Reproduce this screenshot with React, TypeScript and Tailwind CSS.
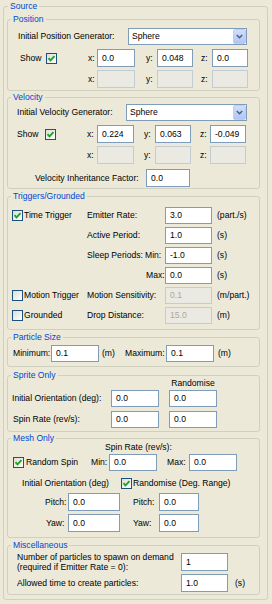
import type { ReactNode } from 'react';

// XP-style property panel: particle emitter "Source" settings

function Group({ title, className, children }: { title: string; className: string; children: ReactNode }) {
  return (
    <fieldset className={`rounded-[3px] border border-[#d0d0bf] ${className}`}>
      <legend className="ml-[3px] px-[2px] text-[#0046d5] leading-[13px]">{title}</legend>
      {children}
    </fieldset>
  );
}

function Box({ value = '', w, h = 'h-[17px]', disabled = false }: { value?: string; w: string; h?: string; disabled?: boolean }) {
  return (
    <div
      className={`${w} ${h} shrink-0 flex items-center pl-[4px] border ${
        disabled ? 'bg-[#ebeae2] border-[#c3cbd4] text-[#aca899]' : 'bg-white border-[#7f9db9] text-black'
      }`}
    >
      {value}
    </div>
  );
}

function Check({ checked = false }: { checked?: boolean }) {
  return (
    <div className="w-[11px] h-[11px] shrink-0 border border-[#1c5180] bg-gradient-to-br from-[#dcdcd7] to-white flex items-center justify-center">
      {checked && (
        <svg width="9" height="9" viewBox="0 0 9 9">
          <polyline points="1.5,4.2 3.5,6.3 7.5,2.2" fill="none" stroke="#21a121" strokeWidth="1.9" />
        </svg>
      )}
    </div>
  );
}

function Combo({ value, w }: { value: string; w: string }) {
  return (
    <div className={`${w} h-[17px] shrink-0 flex items-center justify-between border border-[#7f9db9] bg-white pl-[3px]`}>
      <span>{value}</span>
      <div className="w-[13px] h-[15px] rounded-[2px] border border-[#bccdf4] bg-gradient-to-b from-[#d2defc] to-[#b1c6f5] flex items-center justify-center">
        <svg width="7" height="5" viewBox="0 0 7 5">
          <polyline points="0.8,1 3.5,3.7 6.2,1" fill="none" stroke="#4d6185" strokeWidth="1.6" />
        </svg>
      </div>
    </div>
  );
}

export default function App() {
  return (
    <div className="w-[272px] h-[604px] overflow-hidden bg-[#ece9d8] text-black text-[8.6px] leading-[11px] font-['Liberation_Sans',Arial,sans-serif]">
      <fieldset className="ml-[3px] w-[265px] h-[600px] rounded-[3px] border border-[#d0d0bf]">
        <legend className="ml-[4px] px-[2px] text-[#0046d5] leading-[13px]">Source</legend>

        {/* Position */}
        <Group title="Position" className="ml-[3px] w-[253px] pt-[2px] pb-[2px]">
          <div className="flex items-center h-[17px]">
            <span className="w-[120px] pl-[10px] shrink-0">Initial Position Generator:</span>
            <Combo value="Sphere" w="w-[119px]" />
          </div>
          <div className="flex items-center h-[18px] mt-[4px]">
            <div className="w-[80px] pl-[12px] flex items-center shrink-0">
              <span className="w-[26px]">Show</span>
              <Check checked />
            </div>
            <span className="w-[9px]">x:</span>
            <Box value="0.0" w="w-[38px]" h="h-[18px]" />
            <span className="ml-[11px] w-[11px]">y:</span>
            <Box value="0.048" w="w-[36px]" h="h-[18px]" />
            <span className="ml-[8px] w-[11px]">z:</span>
            <Box value="0.0" w="w-[36px]" h="h-[18px]" />
          </div>
          <div className="flex items-center h-[18px] mt-[3px]">
            <div className="w-[80px] shrink-0" />
            <span className="w-[9px]">x:</span>
            <Box w="w-[38px]" h="h-[18px]" disabled />
            <span className="ml-[11px] w-[11px]">y:</span>
            <Box w="w-[36px]" h="h-[18px]" disabled />
            <span className="ml-[8px] w-[11px]">z:</span>
            <Box w="w-[36px]" h="h-[18px]" disabled />
          </div>
        </Group>

        {/* Velocity */}
        <Group title="Velocity" className="ml-[3px] w-[253px] pb-[1px]">
          <div className="flex items-center h-[17px]">
            <span className="w-[118px] pl-[9px] shrink-0">Initial Velocity Generator:</span>
            <Combo value="Sphere" w="w-[121px]" />
          </div>
          <div className="flex items-center h-[18px] mt-[4px]">
            <div className="w-[79px] pl-[9px] flex items-center shrink-0">
              <span className="w-[28px]">Show</span>
              <Check checked />
            </div>
            <span className="w-[10px]">x:</span>
            <Box value="0.224" w="w-[37px]" h="h-[18px]" />
            <span className="ml-[10px] w-[11px]">y:</span>
            <Box value="0.063" w="w-[36px]" h="h-[18px]" />
            <span className="ml-[9px] w-[10px]">z:</span>
            <Box value="-0.049" w="w-[36px]" h="h-[18px]" />
          </div>
          <div className="flex items-center h-[18px] mt-[3px]">
            <div className="w-[79px] shrink-0" />
            <span className="w-[10px]">x:</span>
            <Box w="w-[37px]" h="h-[18px]" disabled />
            <span className="ml-[10px] w-[11px]">y:</span>
            <Box w="w-[36px]" h="h-[18px]" disabled />
            <span className="ml-[9px] w-[10px]">z:</span>
            <Box w="w-[36px]" h="h-[18px]" disabled />
          </div>
          <div className="flex items-center h-[18px] mt-[5px]">
            <span className="w-[138px] pl-[27px] shrink-0">Velocity Inheritance Factor:</span>
            <Box value="0.0" w="w-[44px]" h="h-[18px]" />
          </div>
        </Group>

        {/* Triggers / Grounded */}
        <Group title="Triggers/Grounded" className="ml-[3px] mt-[1px] w-[253px] pt-[4px] pb-[5px]">
          <div className="flex flex-col gap-[3px]">
            <div className="flex items-center h-[17px]">
              <div className="w-[79px] pl-[4px] flex items-center gap-[1px] shrink-0">
                <Check checked />
                <span>Time Trigger</span>
              </div>
              <span className="w-[78px] shrink-0">Emitter Rate:</span>
              <Box value="3.0" w="w-[47px]" />
              <span className="ml-[5px]">(part./s)</span>
            </div>
            <div className="flex items-center h-[17px]">
              <div className="w-[79px] shrink-0" />
              <span className="w-[78px] shrink-0">Active Period:</span>
              <Box value="1.0" w="w-[47px]" />
              <span className="ml-[5px]">(s)</span>
            </div>
            <div className="flex items-center h-[17px]">
              <div className="w-[79px] shrink-0" />
              <span className="w-[58px] shrink-0">Sleep Periods:</span>
              <span className="w-[20px] shrink-0">Min:</span>
              <Box value="-1.0" w="w-[47px]" />
              <span className="ml-[5px]">(s)</span>
            </div>
            <div className="flex items-center h-[17px]">
              <div className="w-[79px] shrink-0" />
              <span className="w-[78px] pl-[59px] shrink-0">Max:</span>
              <Box value="0.0" w="w-[47px]" />
              <span className="ml-[5px]">(s)</span>
            </div>
            <div className="flex items-center h-[17px]">
              <div className="w-[79px] pl-[4px] flex items-center gap-[1px] shrink-0">
                <Check />
                <span>Motion Trigger</span>
              </div>
              <span className="w-[78px] shrink-0">Motion Sensitivity:</span>
              <Box value="0.1" w="w-[47px]" disabled />
              <span className="ml-[5px]">(m/part.)</span>
            </div>
            <div className="flex items-center h-[17px]">
              <div className="w-[79px] pl-[4px] flex items-center gap-[1px] shrink-0">
                <Check />
                <span>Grounded</span>
              </div>
              <span className="w-[78px] shrink-0">Drop Distance:</span>
              <Box value="15.0" w="w-[47px]" disabled />
              <span className="ml-[5px]">(m)</span>
            </div>
          </div>
        </Group>

        {/* Particle Size */}
        <Group title="Particle Size" className="ml-[3px] mt-[1px] w-[253px] pt-[1px] pb-[4px]">
          <div className="flex items-center h-[17px] pl-[5px]">
            <span className="w-[38px] shrink-0">Minimum:</span>
            <Box value="0.1" w="w-[48px]" />
            <span className="ml-[3px] w-[23px] shrink-0">(m)</span>
            <span className="w-[41px] shrink-0">Maximum:</span>
            <Box value="0.1" w="w-[48px]" />
            <span className="ml-[4px]">(m)</span>
          </div>
        </Group>

        {/* Sprite Only */}
        <Group title="Sprite Only" className="ml-[3px] mt-[2px] w-[253px] pb-[3px]">
          <div className="-mt-[4px] ml-[161px] w-[48px] text-center">Randomise</div>
          <div className="flex items-center h-[17px] mt-[1px]">
            <span className="w-[103px] pl-[4px] shrink-0">Initial Orientation (deg):</span>
            <Box value="0.0" w="w-[48px]" />
            <div className="ml-[10px]">
              <Box value="0.0" w="w-[48px]" />
            </div>
          </div>
          <div className="flex items-center h-[17px] mt-[4px]">
            <span className="w-[103px] pl-[5px] shrink-0">Spin Rate (rev/s):</span>
            <Box value="0.0" w="w-[48px]" />
            <div className="ml-[10px]">
              <Box value="0.0" w="w-[48px]" />
            </div>
          </div>
        </Group>

        {/* Mesh Only */}
        <Group title="Mesh Only" className="ml-[3px] w-[253px] pb-[5px]">
          <div className="-mt-[3px] pl-[97px]">Spin Rate (rev/s):</div>
          <div className="flex items-center h-[17px] mt-[1px]">
            <div className="w-[83px] pl-[5px] flex items-center gap-[2px] shrink-0">
              <Check checked />
              <span>Random Spin</span>
            </div>
            <span className="w-[18px] shrink-0">Min:</span>
            <Box value="0.0" w="w-[48px]" />
            <span className="ml-[10px] w-[22px] shrink-0">Max:</span>
            <Box value="0.0" w="w-[48px]" />
          </div>
          <div className="flex items-center h-[13px] mt-[6px]">
            <span className="w-[113px] pl-[14px] shrink-0">Initial Orientation (deg)</span>
            <Check checked />
            <span className="ml-[1px]">Randomise (Deg. Range)</span>
          </div>
          <div className="flex items-center h-[18px] mt-[3px]">
            <span className="w-[60px] pl-[37px] shrink-0">Pitch:</span>
            <Box value="0.0" w="w-[52px]" h="h-[18px]" />
            <span className="ml-[13px] w-[26px] shrink-0">Pitch:</span>
            <Box value="0.0" w="w-[40px]" h="h-[18px]" />
          </div>
          <div className="flex items-center h-[18px] mt-[3px]">
            <span className="w-[60px] pl-[38px] shrink-0">Yaw:</span>
            <Box value="0.0" w="w-[52px]" h="h-[18px]" />
            <span className="ml-[13px] w-[26px] shrink-0">Yaw:</span>
            <Box value="0.0" w="w-[40px]" h="h-[18px]" />
          </div>
        </Group>

        {/* Miscellaneous */}
        <Group title="Miscellaneous" className="ml-[3px] mt-[1px] w-[253px] pb-[2px]">
          <div className="flex items-center h-[20px]">
            <div className="w-[173px] pl-[9px] leading-[10px] shrink-0">
              <div>Number of particles to spawn on demand</div>
              <div>(required if Emitter Rate = 0):</div>
            </div>
            <Box value="1" w="w-[47px]" h="h-[18px]" />
          </div>
          <div className="flex items-center h-[18px] mt-[2px]">
            <span className="w-[173px] pl-[9px] shrink-0">Allowed time to create particles:</span>
            <Box value="1.0" w="w-[47px]" h="h-[18px]" />
            <span className="ml-[7px]">(s)</span>
          </div>
        </Group>
      </fieldset>
    </div>
  );
}
